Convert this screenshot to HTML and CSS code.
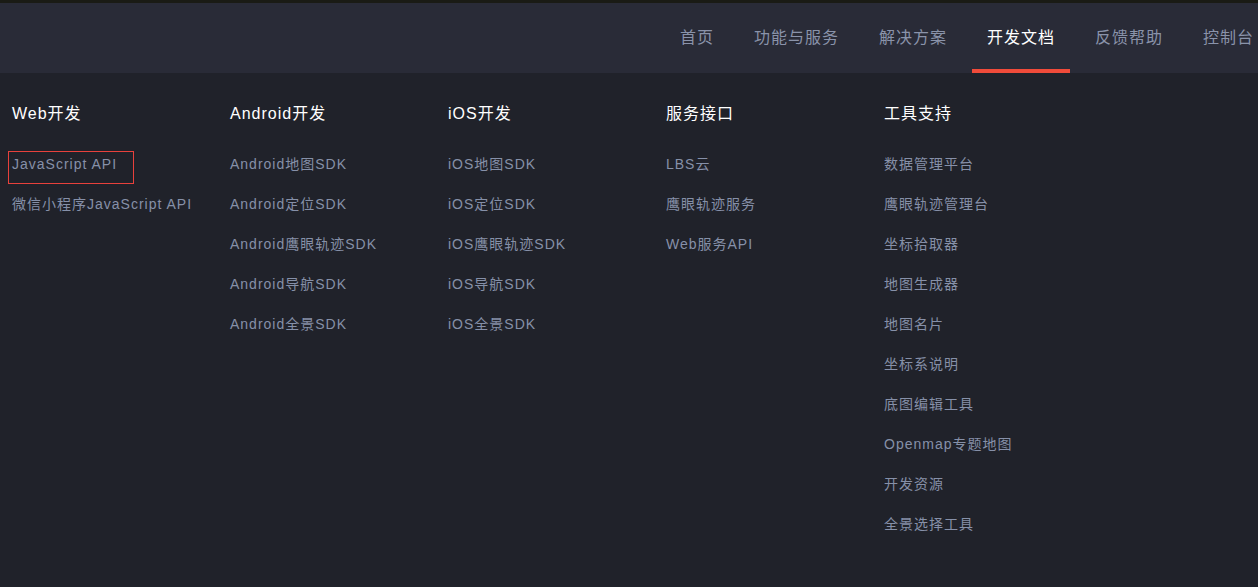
FILE: index.html
```html
<!DOCTYPE html>
<html lang="zh-CN">
<head>
<meta charset="utf-8">
<title>开发文档</title>
<link rel="stylesheet" href="styles.css">
</head>
<body>
<div class="topline"></div>
<header class="header">
  <ul class="nav">
    <li class="nav-item">首页</li>
    <li class="nav-item">功能与服务</li>
    <li class="nav-item">解决方案</li>
    <li class="nav-item active">开发文档</li>
    <li class="nav-item">反馈帮助</li>
    <li class="nav-item">控制台</li>
  </ul>
</header>
<main class="menu">
  <section class="col">
    <h3 class="col-title">Web开发</h3>
    <ul class="links">
      <li><a class="link focused">JavaScript API</a></li>
      <li><a class="link">微信小程序JavaScript API</a></li>
    </ul>
  </section>
  <section class="col">
    <h3 class="col-title">Android开发</h3>
    <ul class="links">
      <li><a class="link">Android地图SDK</a></li>
      <li><a class="link">Android定位SDK</a></li>
      <li><a class="link">Android鹰眼轨迹SDK</a></li>
      <li><a class="link">Android导航SDK</a></li>
      <li><a class="link">Android全景SDK</a></li>
    </ul>
  </section>
  <section class="col">
    <h3 class="col-title">iOS开发</h3>
    <ul class="links">
      <li><a class="link">iOS地图SDK</a></li>
      <li><a class="link">iOS定位SDK</a></li>
      <li><a class="link">iOS鹰眼轨迹SDK</a></li>
      <li><a class="link">iOS导航SDK</a></li>
      <li><a class="link">iOS全景SDK</a></li>
    </ul>
  </section>
  <section class="col">
    <h3 class="col-title">服务接口</h3>
    <ul class="links">
      <li><a class="link">LBS云</a></li>
      <li><a class="link">鹰眼轨迹服务</a></li>
      <li><a class="link">Web服务API</a></li>
    </ul>
  </section>
  <section class="col">
    <h3 class="col-title">工具支持</h3>
    <ul class="links">
      <li><a class="link">数据管理平台</a></li>
      <li><a class="link">鹰眼轨迹管理台</a></li>
      <li><a class="link">坐标拾取器</a></li>
      <li><a class="link">地图生成器</a></li>
      <li><a class="link">地图名片</a></li>
      <li><a class="link">坐标系说明</a></li>
      <li><a class="link">底图编辑工具</a></li>
      <li><a class="link">Openmap专题地图</a></li>
      <li><a class="link">开发资源</a></li>
      <li><a class="link">全景选择工具</a></li>
    </ul>
  </section>
</main>
</body>
</html>
```
FILE: styles.css
```css
html, body {
  margin: 0;
  padding: 0;
  height: 100%;
  overflow: hidden;
}
body {
  background: #20222a;
  font-family: "Liberation Sans", "Noto Sans CJK SC", sans-serif;
}
.topline {
  height: 3px;
  background: #1a1b15;
}
.header {
  height: 70px;
  background: #292b37;
  display: flex;
  justify-content: flex-end;
  overflow: hidden;
}
.nav {
  list-style: none;
  margin: 0 -11px 0 0;
  padding: 0;
  display: flex;
  gap: 10px;
  flex-shrink: 0;
}
.nav-item {
  height: 70px;
  box-sizing: border-box;
  padding: 0 15px;
  line-height: 70px;
  font-size: 16px;
  letter-spacing: 1px;
  color: #8a93aa;
  border-bottom: 4px solid transparent;
  white-space: nowrap;
}
.nav-item.active {
  color: #ffffff;
  border-bottom-color: #f04b3a;
}
.menu {
  display: flex;
  padding: 29px 0 0 12px;
}
.col {
  width: 218px;
  flex-shrink: 0;
}
.col-title {
  margin: 0;
  height: 24px;
  line-height: 24px;
  font-size: 16px;
  font-weight: normal;
  letter-spacing: 1px;
  color: #ffffff;
  white-space: nowrap;
}
.links {
  list-style: none;
  margin: 25px 0 0 0;
  padding: 0;
}
.links li {
  height: 40px;
}
.link {
  display: inline-block;
  margin-left: -4px;
  padding: 0 3px 7px 3px;
  line-height: 24px;
  border: 1px solid transparent;
  font-size: 14px;
  letter-spacing: 1px;
  color: #8690a8;
  white-space: nowrap;
}
.link.focused {
  border-color: #e8413c;
  padding-right: 16px;
}
```
